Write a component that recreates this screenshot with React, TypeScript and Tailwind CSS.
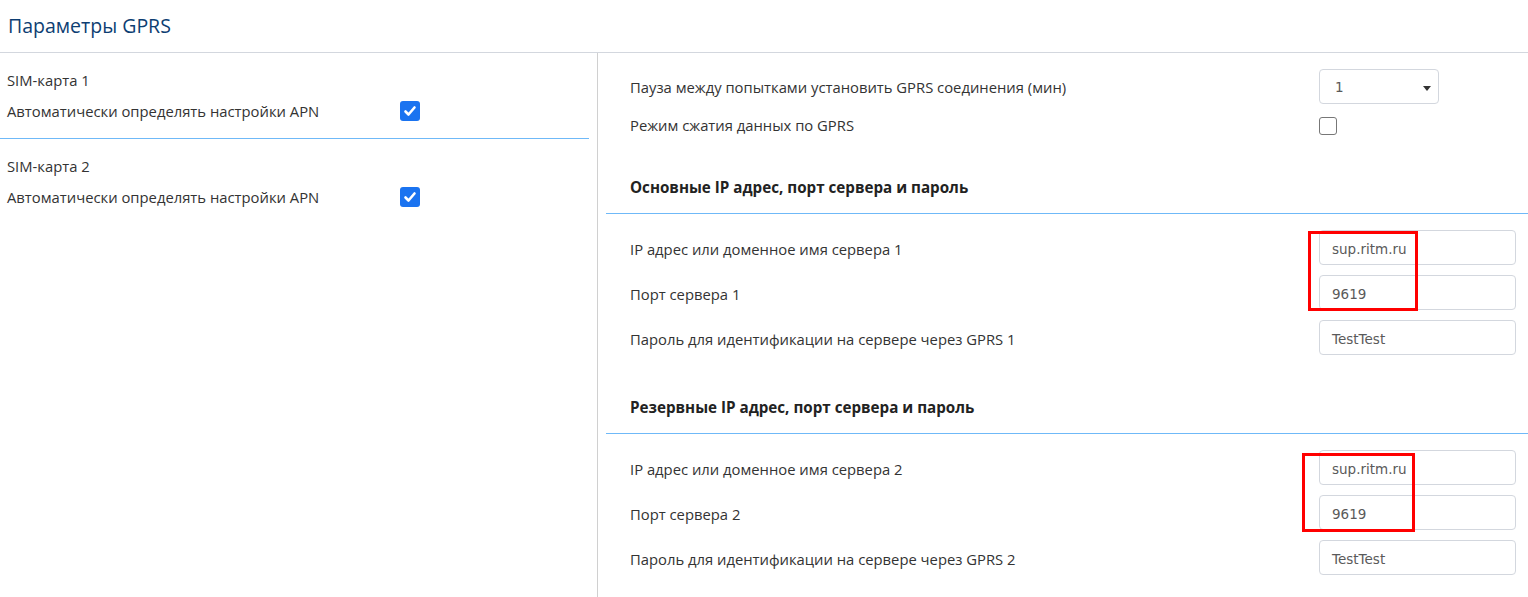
import React from 'react'

const font = { fontFamily: '"Open Sans", "Noto Sans", sans-serif' }
const inputFont = { fontFamily: '"DejaVu Sans", Verdana, sans-serif' }

function CheckedBox() {
  return (
    <div className="w-[20px] h-[20px] rounded-[3px] bg-[#1a73f0] flex items-center justify-center shrink-0">
      <svg width="14" height="14" viewBox="0 0 14 14">
        <path d="M2.5 7.5 L5.5 10.5 L11.5 3.5" fill="none" stroke="#fff" strokeWidth="2.6" strokeLinecap="round" strokeLinejoin="round" />
      </svg>
    </div>
  )
}

function SimBlock({ title, last }: { title: string; last?: boolean }) {
  return (
    <div className="mr-[8px]">
      <div className="pt-[16px] pb-[12px]">
        <div className="h-[22px] flex items-center pl-[7px] text-[14.8px] text-[#333]">{title}</div>
        <div className="h-[30px] mt-[5px] flex items-center pl-[7px]">
          <div className="w-[393px] text-[14.8px] text-[#333]">Автоматически определять настройки APN</div>
          <CheckedBox />
        </div>
      </div>
      {!last && <div className="h-[1px] bg-[#6fb9f8]" />}
    </div>
  )
}

function Field({ label, value }: { label: string; value: string }) {
  return (
    <div className="h-[35px] flex items-center pl-[32px] pr-[12px]">
      <div className="flex-1 pt-[4px] text-[14.8px] text-[#333]">{label}</div>
      <div
        className="w-[197px] h-[35px] border border-[#d3d7de] rounded-[4px] flex items-center pt-[3px] px-[12px] text-[13.5px] text-[#5a5a5a]"
        style={inputFont}
      >
        {value}
      </div>
    </div>
  )
}

function SectionHeading({ text, pt }: { text: string; pt: string }) {
  return (
    <div className={pt}>
      <div className="h-[20px] mb-[16px] flex items-center pl-[32px] text-[15.2px] font-bold text-[#222]">{text}</div>
      <div className="h-[1px] ml-[8px] bg-[#6fb9f8]" />
    </div>
  )
}

export default function App() {
  return (
    <div className="w-[1528px] h-[597px] bg-white overflow-hidden flex flex-col" style={font}>
      {/* Header */}
      <div className="h-[53px] border-b border-[#d3d7de] flex items-center pl-[8px] shrink-0">
        <h1 className="text-[19.5px] font-medium text-[#0d3e72] mb-[1px]">Параметры GPRS</h1>
      </div>

      <div className="flex flex-1">
        {/* Left column */}
        <div className="w-[598px] border-r border-[#d0d0d0] shrink-0">
          <SimBlock title="SIM-карта 1" />
          <SimBlock title="SIM-карта 2" last />
        </div>

        {/* Right column */}
        <div className="flex-1 pt-[16px]">
          <div className="flex flex-col gap-[4px]">
            <div className="h-[35px] flex items-center pl-[32px]">
              <div className="w-[689px] pt-[2px] text-[14.8px] text-[#333]">
                Пауза между попытками установить GPRS соединения (мин)
              </div>
              <div
                className="w-[120px] h-[35px] border border-[#d3d7de] rounded-[4px] flex items-center justify-between pt-[2px] pl-[15px] pr-[6px] text-[13.5px] text-[#5a5a5a]"
                style={inputFont}
              >
                <span>1</span>
                <svg width="10" height="8" viewBox="0 0 10 8">
                  <path d="M1 2 L9 2 L5 7 Z" fill="#333" />
                </svg>
              </div>
            </div>
            <div className="h-[35px] flex items-center pl-[32px]">
              <div className="w-[689px] text-[14.8px] text-[#333]">Режим сжатия данных по GPRS</div>
              <div className="w-[18px] h-[18px] border border-[#777] rounded-[3px]" />
            </div>
          </div>

          <SectionHeading text="Основные IP адрес, порт сервера и пароль" pt="pt-[34px]" />
          <div className="relative pt-[16px] flex flex-col gap-[10px]">
            <Field label="IP адрес или доменное имя сервера 1" value="sup.ritm.ru" />
            <Field label="Порт сервера 1" value="9619" />
            <Field label="Пароль для идентификации на сервере через GPRS 1" value="TestTest" />
            <div className="absolute left-[710px] top-[17px] w-[110px] h-[80px] border-[3px] border-[#ff0000]" />
          </div>

          <SectionHeading text="Резервные IP адрес, порт сервера и пароль" pt="pt-[42px]" />
          <div className="relative pt-[16px] flex flex-col gap-[10px]">
            <Field label="IP адрес или доменное имя сервера 2" value="sup.ritm.ru" />
            <Field label="Порт сервера 2" value="9619" />
            <Field label="Пароль для идентификации на сервере через GPRS 2" value="TestTest" />
            <div className="absolute left-[704px] top-[19px] w-[113px] h-[79px] border-[3px] border-[#ff0000]" />
          </div>
        </div>
      </div>
    </div>
  )
}
